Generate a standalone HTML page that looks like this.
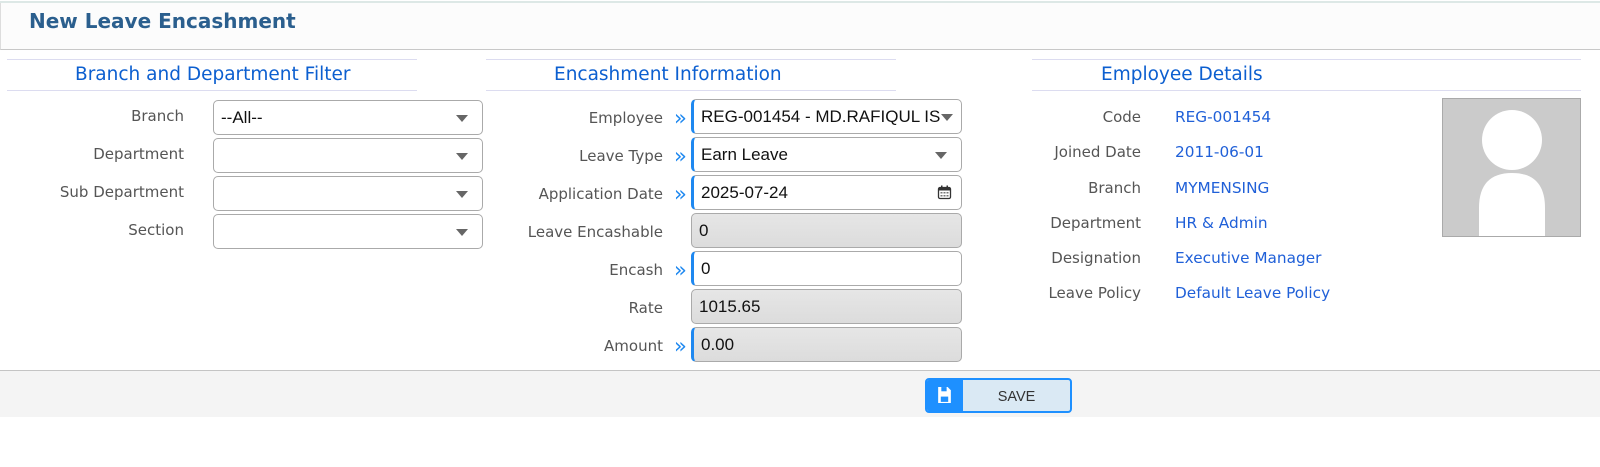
<!DOCTYPE html>
<html><head><meta charset="utf-8"><style>
*{box-sizing:border-box;margin:0;padding:0}
body{width:1600px;height:467px;background:#fff;font-family:"DejaVu Sans","Liberation Sans",sans-serif;position:relative;overflow:hidden}
.abs{position:absolute}
.topline{left:0;top:1px;width:1600px;height:2px;background:#dde8e6}
.hdr{left:0;top:3px;width:1600px;height:47px;background:#fcfcfc;border-bottom:1px solid #c8c8c8;border-left:1px solid #ddd}
.title{left:29px;top:9px;font-size:20px;font-weight:bold;color:#2b5f8e}
.sec{height:32px;border-top:1px solid #dcdcf0;border-bottom:1px solid #dcdcf0;color:#0c5fd0;font-size:18.5px;text-align:left;padding-left:68px;line-height:30px}
.lbl{font-size:15px;color:#555;text-align:right;width:200px}
.inp{height:35px;border:1px solid #aaa;border-radius:5px;background:#fff;font-family:"Liberation Sans",sans-serif;font-size:17px;color:#111;padding-left:7px;line-height:33px}
.req{border-left:3px solid #1e88f0}
.dis{background:linear-gradient(#e6e6e6,#dcdcdc)}
.arrow{font-size:21px;color:#1e88f0;line-height:33px}
.caret{position:absolute;right:14px;top:14px;width:0;height:0;border-left:6px solid transparent;border-right:6px solid transparent;border-top:7px solid #666}
.val{font-size:15.3px;color:#2060d8}
</style></head><body>
<div class="abs topline"></div>
<div class="abs hdr"></div>
<div class="abs title">New Leave Encashment</div>

<div class="abs sec" style="left:7px;top:59px;width:410px">Branch and Department Filter</div>
<div class="abs sec" style="left:486px;top:59px;width:410px">Encashment Information</div>
<div class="abs sec" style="left:1032px;top:59px;width:549px;padding-left:69px">Employee Details</div>

<div class="abs lbl" style="left:-16px;top:107px">Branch</div>
<div class="abs inp" style="left:213px;top:100px;width:270px">--All--<span class="caret"></span></div>
<div class="abs lbl" style="left:-16px;top:145px">Department</div>
<div class="abs inp" style="left:213px;top:138px;width:270px"><span class="caret"></span></div>
<div class="abs lbl" style="left:-16px;top:183px">Sub Department</div>
<div class="abs inp" style="left:213px;top:176px;width:270px"><span class="caret"></span></div>
<div class="abs lbl" style="left:-16px;top:221px">Section</div>
<div class="abs inp" style="left:213px;top:214px;width:270px"><span class="caret"></span></div>

<div class="abs lbl" style="left:463px;top:109px">Employee</div>
<div class="abs arrow" style="left:674px;top:102px">»</div>
<div class="abs inp req" style="left:691px;top:99px;width:271px;overflow:hidden;white-space:nowrap">REG-001454 - MD.RAFIQUL IS<span class="caret" style="right:8px"></span></div>
<div class="abs lbl" style="left:463px;top:147px">Leave Type</div>
<div class="abs arrow" style="left:674px;top:140px">»</div>
<div class="abs inp req" style="left:691px;top:137px;width:271px">Earn Leave<span class="caret"></span></div>
<div class="abs lbl" style="left:463px;top:185px">Application Date</div>
<div class="abs arrow" style="left:674px;top:178px">»</div>
<div class="abs inp req" style="left:691px;top:175px;width:271px">2025-07-24
<svg class="abs" style="right:9px;top:9px" width="15" height="15" viewBox="0 0 15 15"><rect x="1.5" y="2.5" width="12" height="11" rx="1.5" fill="none" stroke="#333" stroke-width="1.3"/><rect x="1.5" y="2.5" width="12" height="3" fill="#333"/><rect x="4" y="0.5" width="1.5" height="3" fill="#333"/><rect x="9.5" y="0.5" width="1.5" height="3" fill="#333"/><g fill="#777"><rect x="3.5" y="7" width="2" height="1.5"/><rect x="6.5" y="7" width="2" height="1.5"/><rect x="9.5" y="7" width="2" height="1.5"/><rect x="3.5" y="10" width="2" height="1.5"/><rect x="6.5" y="10" width="2" height="1.5"/><rect x="9.5" y="10" width="2" height="1.5"/></g></svg></div>
<div class="abs lbl" style="left:463px;top:223px">Leave Encashable</div>
<div class="abs inp dis" style="left:691px;top:213px;width:271px">0</div>
<div class="abs lbl" style="left:463px;top:261px">Encash</div>
<div class="abs arrow" style="left:674px;top:254px">»</div>
<div class="abs inp req" style="left:691px;top:251px;width:271px">0</div>
<div class="abs lbl" style="left:463px;top:299px">Rate</div>
<div class="abs inp dis" style="left:691px;top:289px;width:271px">1015.65</div>
<div class="abs lbl" style="left:463px;top:337px">Amount</div>
<div class="abs arrow" style="left:674px;top:330px">»</div>
<div class="abs inp req dis" style="left:691px;top:327px;width:271px">0.00</div>

<div class="abs lbl" style="left:941px;top:108px">Code</div>
<div class="abs val" style="left:1175px;top:108px">REG-001454</div>
<div class="abs lbl" style="left:941px;top:143px">Joined Date</div>
<div class="abs val" style="left:1175px;top:143px">2011-06-01</div>
<div class="abs lbl" style="left:941px;top:179px">Branch</div>
<div class="abs val" style="left:1175px;top:179px">MYMENSING</div>
<div class="abs lbl" style="left:941px;top:214px">Department</div>
<div class="abs val" style="left:1175px;top:214px">HR &amp; Admin</div>
<div class="abs lbl" style="left:941px;top:249px">Designation</div>
<div class="abs val" style="left:1175px;top:249px">Executive Manager</div>
<div class="abs lbl" style="left:941px;top:284px">Leave Policy</div>
<div class="abs val" style="left:1175px;top:284px">Default Leave Policy</div>

<svg class="abs" style="left:1442px;top:98px" width="139" height="139" viewBox="0 0 139 139">
<rect x="0.5" y="0.5" width="138" height="138" fill="#cbcbcb" stroke="#aaa"/>
<circle cx="70" cy="42" r="30" fill="#fff"/>
<path d="M37 138 V110 Q37 75 70 75 Q103 75 103 110 V138 Z" fill="#fff"/>
</svg>

<div class="abs" style="left:0;top:370px;width:1600px;height:1px;background:#c4c4c4"></div>
<div class="abs" style="left:0;top:371px;width:1600px;height:46px;background:#f4f4f4"></div>
<div class="abs" style="left:925px;top:378px;width:147px;height:35px;border:2px solid #1e90ff;border-radius:4px;background:#dae9f4;overflow:hidden">
<div class="abs" style="left:0;top:0;width:36px;height:31px;background:#1e90ff"></div>
<svg class="abs" style="left:10px;top:6px" width="15" height="18" viewBox="0 0 14 17"><path d="M1 1 H10 L13 4 V16 H1 Z" fill="#fff"/><rect x="4" y="1" width="5" height="4" fill="#1e90ff"/><rect x="3.5" y="10" width="7" height="5" fill="#1e90ff"/></svg>
<div class="abs" style="left:36px;top:2px;width:107px;line-height:31px;text-align:center;font-family:'Liberation Sans',sans-serif;font-size:14.5px;color:#333">SAVE</div>
</div>
</body></html>
